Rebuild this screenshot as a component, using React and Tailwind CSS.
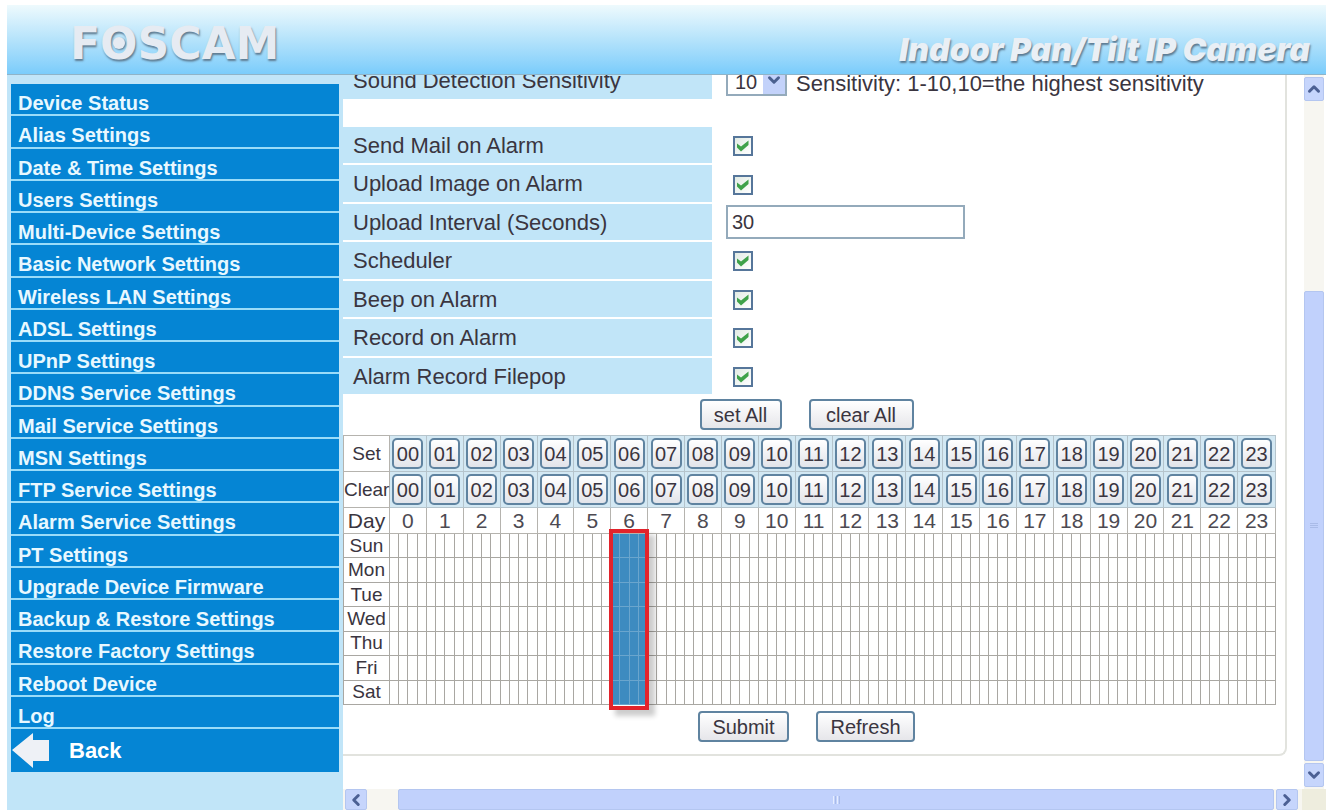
import React, { useState } from "react";
import { ChevronDown, ChevronLeft, ChevronRight, ChevronUp } from "lucide-react";

const MENU = [
  "Device Status",
  "Alias Settings",
  "Date & Time Settings",
  "Users Settings",
  "Multi-Device Settings",
  "Basic Network Settings",
  "Wireless LAN Settings",
  "ADSL Settings",
  "UPnP Settings",
  "DDNS Service Settings",
  "Mail Service Settings",
  "MSN Settings",
  "FTP Service Settings",
  "Alarm Service Settings",
  "PT Settings",
  "Upgrade Device Firmware",
  "Backup & Restore Settings",
  "Restore Factory Settings",
  "Reboot Device",
  "Log",
];

const OPTIONS = [
  { id: "mail", label: "Send Mail on Alarm" },
  { id: "upload", label: "Upload Image on Alarm" },
  { id: "interval", label: "Upload Interval (Seconds)", text: "30" },
  { id: "scheduler", label: "Scheduler" },
  { id: "beep", label: "Beep on Alarm" },
  { id: "record", label: "Record on Alarm" },
  { id: "filepop", label: "Alarm Record Filepop" },
];

const DAYS = ["Sun", "Mon", "Tue", "Wed", "Thu", "Fri", "Sat"];
const HOURS = Array.from({ length: 24 }, (_, i) => i);
const QUARTERS = Array.from({ length: 96 }, (_, i) => i);

const Header = () => (
  <header className="flex h-[70px] shrink-0 items-center justify-between border-b border-[#8fb4c8] bg-linear-to-b from-[#eefafd] via-[#b5e3fb] to-[#7accfb] pl-[63px] pr-4">
    <div className="pt-2 font-['DejaVu_Sans'] text-[44px] font-bold leading-none text-[#e6ebf2] [text-shadow:1px_2px_2px_#5f7c92]">
      F
      <span className="relative">
        O
        <span className="absolute left-1/2 top-1/2 size-3 -translate-x-1/2 -translate-y-1/2 rounded-full bg-[#e6ebf2] shadow-[1px_1px_2px_#5f7c92]" />
      </span>
      SCAM
    </div>
    <h1 className="pt-5 font-['Inter'] text-[32px] font-black italic leading-9 text-[#e9eff5] [text-shadow:1px_2px_2px_#5b7a92]">
      Indoor Pan/Tilt IP Camera
    </h1>
  </header>
);

const Sidebar = () => (
  <aside className="w-[336px] shrink-0 bg-[#c1e5f8] px-1 pt-[9px]">
    <nav className="font-bold text-[#e8f8ff]">
      <ul className="grid h-[645px] auto-rows-fr">
        {MENU.map((item) => (
          <li key={item} className="border-b-2 border-[#9adcf9] bg-[#0585d4]">
            <a href="#" className="block pl-[7px] pt-[7px] text-[20px] leading-6">
              {item}
            </a>
          </li>
        ))}
      </ul>
      <a href="#" className="flex h-[43px] items-center gap-5 bg-[#0585d4] text-[22px] text-white">
        <svg viewBox="0 0 38 36" className="h-9 w-[38px]" fill="#eef1f6">
          <path d="M1 17 22 0v7h16v21H22v7z" />
        </svg>
        Back
      </a>
    </nav>
  </aside>
);

const CheckBox = ({ id }) => {
  const [on, setOn] = useState(true);
  return (
    <span className="ml-[7px] mt-[2px] grid size-5">
      <input
        id={id}
        type="checkbox"
        checked={on}
        onChange={() => setOn(!on)}
        className="col-start-1 row-start-1 size-5 appearance-none border-2 border-[#56769a] bg-linear-to-br from-[#e2ebe4] to-white"
      />
      {on && (
        <svg viewBox="0 0 20 20" className="pointer-events-none col-start-1 row-start-1 size-5" fill="#3fa24a">
          <path d="M4 7.5 8 10.500 15.500 4.500v4.500L8 15.500 4 11.500z" />
        </svg>
      )}
    </span>
  );
};

const PushButton = ({ children, className }) => (
  <button
    type="button"
    className={`h-[31px] rounded-[4px] border-2 border-[#5f83a0] bg-linear-to-b from-white to-[#e6e6ea] text-[20px] leading-6 ${className}`}
  >
    {children}
  </button>
);

const HourButtons = ({ label }) => (
  <tr className="h-[36px]">
    <th className="border border-[#b5b3ae] font-normal">{label}</th>
    {HOURS.map((h) => (
      <td key={h} colSpan={4} className="border border-[#b5c4cc] bg-[#d3e8f3]">
        <button
          type="button"
          aria-label={`${label} hour ${h}`}
          className="mx-auto block h-[31px] w-[31px] rounded-[5px] border-2 border-[#5f83a0] bg-linear-to-b from-white to-[#e2e4ea] text-[20px] leading-6"
        >
          {String(h).padStart(2, "0")}
        </button>
      </td>
    ))}
  </tr>
);

const Schedule = () => (
  <table className="h-[270px] w-full table-fixed border-collapse text-center text-[19px] leading-5">
    <colgroup>
      <col className="w-[46px]" />
      {QUARTERS.map((q) => (
        <col key={q} />
      ))}
    </colgroup>
    <tbody>
      <HourButtons label="Set" />
      <HourButtons label="Clear" />
      <tr className="h-[26px] text-[21px]">
        <th className="border border-[#b5b3ae] font-normal">Day</th>
        {HOURS.map((h) => (
          <td key={h} colSpan={4} className="relative border border-[#b5b3ae] text-[#4d4a52]">
            {h}
            {h === 6 && (
              <span className="absolute -left-[2px] -right-[2px] top-full -mt-[4px] h-[181px] border-4 border-[#e2232b] shadow-[6px_6px_5px_#00000033]" />
            )}
          </td>
        ))}
      </tr>
      {DAYS.map((day) => (
        <tr key={day}>
          <th className="border border-[#a9a7a2] font-normal">{day}</th>
          {QUARTERS.map((q) => (
            <td
              key={q}
              className={
                q >= 24 && q < 28 ? "border border-[#6aa5cd] bg-[#3d8bc0]" : "border border-[#a9a7a2]"
              }
            />
          ))}
        </tr>
      ))}
    </tbody>
  </table>
);

const Settings = () => (
  <form className="-mt-[14px] mr-[17px] border-b-2 border-r-2 border-[#e2e3de] rounded-br-lg pb-[12px] pr-[9px] text-[#3a3540]">
    <div className="flex h-[38px] items-stretch text-[22px]">
      <label htmlFor="sensitivity" className="w-[369px] bg-[#c1e5f8] pl-[10px] leading-10">
        Sound Detection Sensitivity
      </label>
      <div className="flex items-center pl-[14px]">
        <span className="grid">
          <select
            id="sensitivity"
            defaultValue="10"
            className="col-start-1 row-start-1 h-[31px] w-[61px] appearance-none border-2 border-[#94aabb] bg-white pl-[7px] text-[20px]"
          >
            {HOURS.slice(1, 11).map((n) => (
              <option key={n}>{n}</option>
            ))}
          </select>
          <span className="pointer-events-none col-start-1 row-start-1 my-[2px] mr-[2px] flex w-[22px] items-center justify-center justify-self-end bg-[#c3d2fa]">
            <ChevronDown size={18} strokeWidth={4} color="#4a608f" />
          </span>
        </span>
        <span className="pl-[9px] pt-[8px] leading-8">Sensitivity: 1-10,10=the highest sensitivity</span>
      </div>
    </div>

    <div className="mt-[28px] grid h-[269px] auto-rows-fr text-[22px]">
      {OPTIONS.map((opt) => (
        <div key={opt.id} className="flex items-stretch border-b-2 border-white">
          <label htmlFor={opt.id} className="w-[369px] bg-[#c1e5f8] pl-[10px] leading-[38px]">
            {opt.label}
          </label>
          <div className="flex items-center pl-[14px]">
            {opt.text ? (
              <input
                id={opt.id}
                type="text"
                defaultValue={opt.text}
                className="h-[34px] w-[239px] border-2 border-[#94aabb] bg-white pl-1 text-[20px]"
              />
            ) : (
              <CheckBox id={opt.id} />
            )}
          </div>
        </div>
      ))}
    </div>

    <div className="flex justify-center gap-[27px] pb-[5px] pr-[6px] pt-[3px]">
      <PushButton className="w-[82px]">set All</PushButton>
      <PushButton className="w-[105px]">clear All</PushButton>
    </div>

    <Schedule />

    <div className="flex justify-center gap-[27px] pr-[6px] pt-[6px]">
      <PushButton className="w-[91px]">Submit</PushButton>
      <PushButton className="w-[99px]">Refresh</PushButton>
    </div>
  </form>
);

const ArrowButton = ({ icon: Icon, label, className }) => (
  <button
    type="button"
    aria-label={label}
    className={`flex shrink-0 items-center justify-center rounded-[2px] border border-[#b4c6f0] bg-[#c6d5fc] ${className}`}
  >
    <Icon size={18} strokeWidth={4} color="#4c6094" />
  </button>
);

export default function App() {
  return (
    <div className="flex h-screen flex-col bg-white pb-[2px] pl-[7px] pr-[3px] pt-[5px] font-['Liberation_Sans',sans-serif]">
      <Header />
      <div className="flex min-h-0 flex-1">
        <Sidebar />
        <div className="flex min-w-0 flex-1 flex-col">
          <div className="flex min-h-0 flex-1">
            <main className="min-w-0 flex-1 overflow-hidden">
              <Settings />
            </main>
            <div className="mr-[2px] flex w-5 flex-col bg-[#f7f6f1]">
              <ArrowButton icon={ChevronUp} label="Scroll up" className="mt-[2px] h-6" />
              <div className="grow-[192]" />
              <div className="flex grow-[468] flex-col items-center justify-center gap-px rounded-[2px] border border-[#b4c6f0] bg-[#c1d1fc]">
                <span className="h-px w-2 bg-[#a9bbe8]" />
                <span className="h-px w-2 bg-[#a9bbe8]" />
                <span className="h-px w-2 bg-[#a9bbe8]" />
              </div>
              <ArrowButton icon={ChevronDown} label="Scroll down" className="mb-[2px] mt-[2px] h-6" />
            </div>
          </div>
          <div className="flex h-[21px] shrink-0 bg-[#f7f6f1]">
            <ArrowButton icon={ChevronLeft} label="Scroll left" className="ml-[2px] w-[22px]" />
            <div className="w-[31px]" />
            <div className="flex flex-1 items-center justify-center gap-px rounded-[2px] border border-[#b4c6f0] bg-[#c1d1fc]">
              <span className="h-2 w-px bg-[#e6edff]" />
              <span className="h-2 w-px bg-[#a9bbe8]" />
              <span className="h-2 w-px bg-[#e6edff]" />
              <span className="h-2 w-px bg-[#a9bbe8]" />
            </div>
            <ArrowButton icon={ChevronRight} label="Scroll right" className="ml-[2px] w-[22px]" />
            <div className="ml-1 w-6 bg-[#eeedde]" />
          </div>
        </div>
      </div>
    </div>
  );
}
